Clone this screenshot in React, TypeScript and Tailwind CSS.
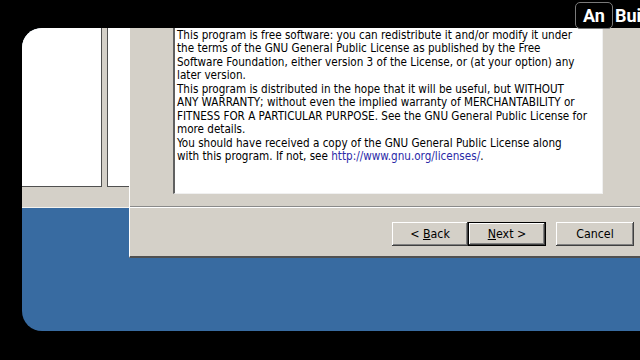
import React from "react";

const bevel =
  "shadow-[inset_-1px_-1px_0_#404040,inset_1px_1px_0_#ffffff,inset_-2px_-2px_0_#808080]";

function Btn({ children, def }: { children: React.ReactNode; def?: boolean }) {
  return (
    <div
      className={
        "h-[24px] flex items-center justify-center text-[12.3px] text-black bg-[#d4d0c8] whitespace-pre " +
        (def
          ? "w-[78px] border border-black shadow-[inset_-1px_-1px_0_#404040,inset_1px_1px_0_#ffffff,inset_-2px_-2px_0_#808080]"
          : "w-[76px] " + bevel)
      }
    >
      {children}
    </div>
  );
}

export default function App() {
  const font = { fontFamily: '"DejaVu Sans Condensed", "DejaVu Sans", sans-serif' };
  return (
    <div className="relative w-[640px] h-[360px] bg-black overflow-hidden flex flex-col pt-[28px] pl-[22px] pb-[29px]">
      {/* screen */}
      <div className="relative flex-1 w-[640px] rounded-l-[20px] overflow-hidden flex flex-col bg-[#386ba1]">
        {/* background window */}
        <div className="flex flex-col bg-[#d4d0c8] border-b border-b-[#f4f2ee]">
          <div className="flex h-[159px]">
            <div className="w-[80px] bg-white border-r border-b border-[#505050]" />
            <div className="w-[5px] bg-[#d4d0c8]" />
            <div className="flex-1 bg-white border-l border-b border-[#505050]" />
          </div>
          <div className="h-[20px]" />
        </div>
        <div className="flex-1" />

        {/* dialog window */}
        <div
          className="absolute left-[107px] top-[-2px] w-[560px] h-[232px] bg-[#d4d0c8] border-l border-l-white border-b-2 border-b-[#505050] flex flex-col"
          style={font}
        >
          <div className="pl-[43px]">
            <div className="w-[430px] h-[168px] bg-white border-l-2 border-t-2 border-l-[#606060] border-t-[#606060] border-r border-b border-r-[#f0f0f0] border-b-[#f0f0f0] pl-[2px] pt-[1px] text-[11.6px] leading-[13.45px] text-black whitespace-nowrap">
              This program is free software: you can redistribute it and/or modify it under
              <br />
              the terms of the GNU General Public License as published by the Free
              <br />
              Software Foundation, either version 3 of the License, or (at your option) any
              <br />
              later version.
              <br />
              This program is distributed in the hope that it will be useful, but WITHOUT
              <br />
              ANY WARRANTY; without even the implied warranty of MERCHANTABILITY or
              <br />
              FITNESS FOR A PARTICULAR PURPOSE. See the GNU General Public License for
              <br />
              more details.
              <br />
              You should have received a copy of the GNU General Public License along
              <br />
              with this program. If not, see{" "}
              <span className="text-[#2a2aa8]">http://www.gnu.org/licenses/</span>.
            </div>
          </div>
          <div className="mt-[12px] border-t border-t-[#8a8a8a] border-b border-b-white" />
          <div className="mt-[14px] pl-[262px] flex items-center">
            <Btn>
              {"< "}<span className="underline">B</span>ack
            </Btn>
            <Btn def>
              <span className="underline">N</span>{"ext >"}
            </Btn>
            <div className="w-[10px]" />
            <div className={"w-[78px] h-[24px] flex items-center justify-center text-[12.3px] text-black " + bevel}>
              Cancel
            </div>
          </div>
        </div>
      </div>

      {/* caption badge */}
      <div
        className="absolute top-[2px] left-[575px] flex items-center text-white font-bold text-[18px]"
        style={{ fontFamily: "Roboto, sans-serif" }}
      >
        <div className="w-[38px] h-[27px] rounded-[5px] border border-[#7a7a7a] bg-black flex items-center justify-center">
          An
        </div>
        <div className="ml-[2px]">Bui</div>
      </div>
    </div>
  );
}
